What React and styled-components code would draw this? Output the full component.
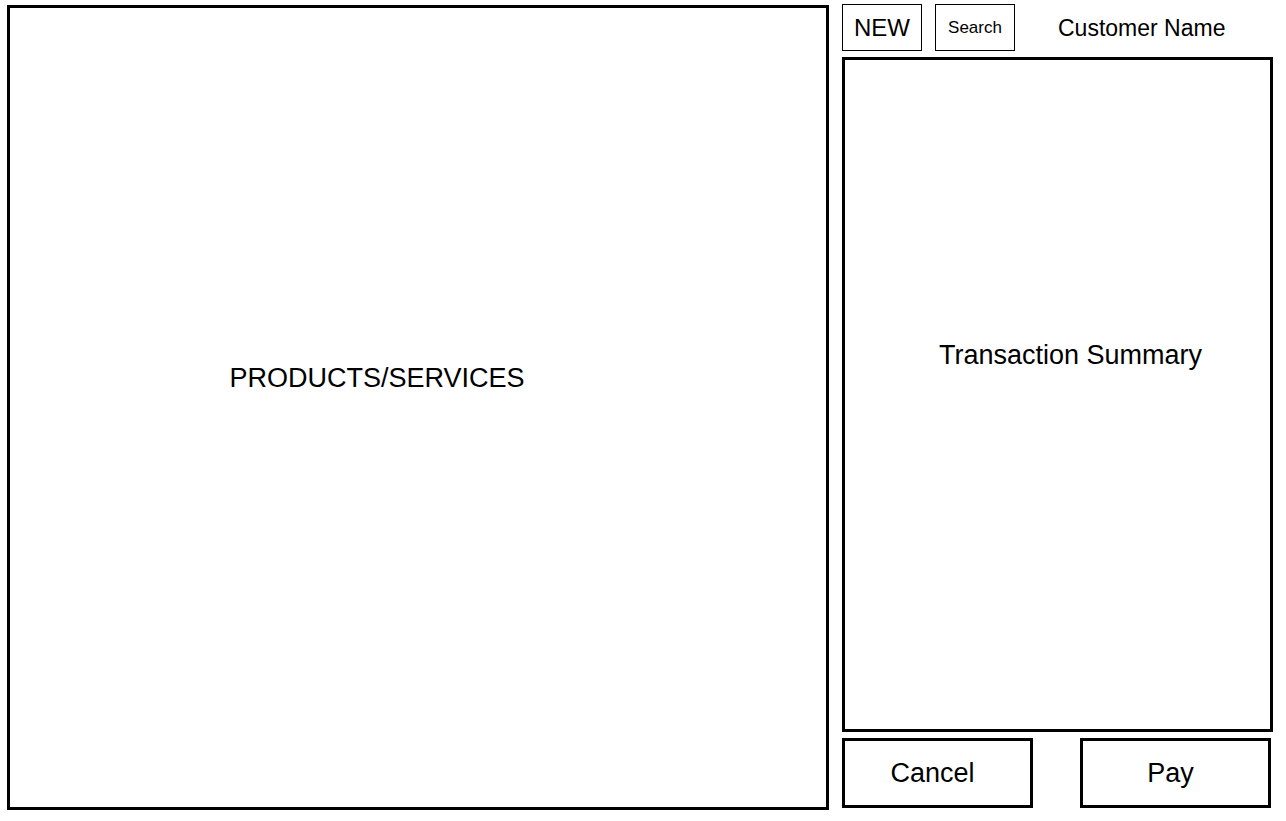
import React from "react";
import styled, { createGlobalStyle } from "styled-components";

const GlobalStyle = createGlobalStyle`
  *, *::before, *::after { box-sizing: border-box; }
  body {
    margin: 0;
    background: #fff;
    color: #000;
    font-family: "Liberation Sans", Arial, sans-serif;
  }
`;

const Page = styled.main`
  display: grid;
  grid-template-columns: minmax(0, 822fr) minmax(0, 431fr);
  column-gap: 13px;
  min-height: 100vh;
  padding: 4px 13px 11px 7px;
`;

const Panel = styled.section`
  display: flex;
  align-items: center;
  justify-content: center;
  border: 3px solid #000;
`;

const ProductsPanel = styled(Panel)`
  margin-top: 1px;
  padding: 0 82px 60px 0;
`;

const SummaryPanel = styled(Panel)`
  flex: 1;
  padding: 0 0 80px 26px;
`;

const PanelTitle = styled.h2`
  margin: 0;
  font-size: 27px;
  line-height: 32px;
  font-weight: 400;
`;

const Sale = styled.div`
  display: flex;
  flex-direction: column;
  gap: 6px;
  padding-bottom: 2px;
`;

const CustomerBar = styled.header`
  display: flex;
  align-items: center;
  gap: 13px;
`;

const Button = styled.button`
  padding: 0;
  background: #fff;
  color: #000;
  font-family: inherit;
  cursor: pointer;
`;

const CustomerButton = styled(Button)`
  width: 80px;
  height: 47px;
  border: 1px solid #000;
  font-size: ${({ $small }) => ($small ? 17 : 24)}px;
`;

const CustomerName = styled.span`
  padding-left: 30px;
  font-size: 23px;
  line-height: 28px;
  white-space: nowrap;
`;

const Actions = styled.footer`
  display: flex;
  justify-content: space-between;
  padding-right: 2px;
`;

const ActionButton = styled(Button)`
  width: 191px;
  height: 70px;
  padding-right: 10px;
  border: 3px solid #000;
  font-size: 27px;
`;

export default function App() {
  return (
    <>
      <GlobalStyle />
      <Page>
        <ProductsPanel>
          <PanelTitle>PRODUCTS/SERVICES</PanelTitle>
        </ProductsPanel>
        <Sale>
          <CustomerBar>
            <CustomerButton type="button">NEW</CustomerButton>
            <CustomerButton type="button" $small>Search</CustomerButton>
            <CustomerName>Customer Name</CustomerName>
          </CustomerBar>
          <SummaryPanel>
            <PanelTitle>Transaction Summary</PanelTitle>
          </SummaryPanel>
          <Actions>
            <ActionButton type="button">Cancel</ActionButton>
            <ActionButton type="button">Pay</ActionButton>
          </Actions>
        </Sale>
      </Page>
    </>
  );
}
